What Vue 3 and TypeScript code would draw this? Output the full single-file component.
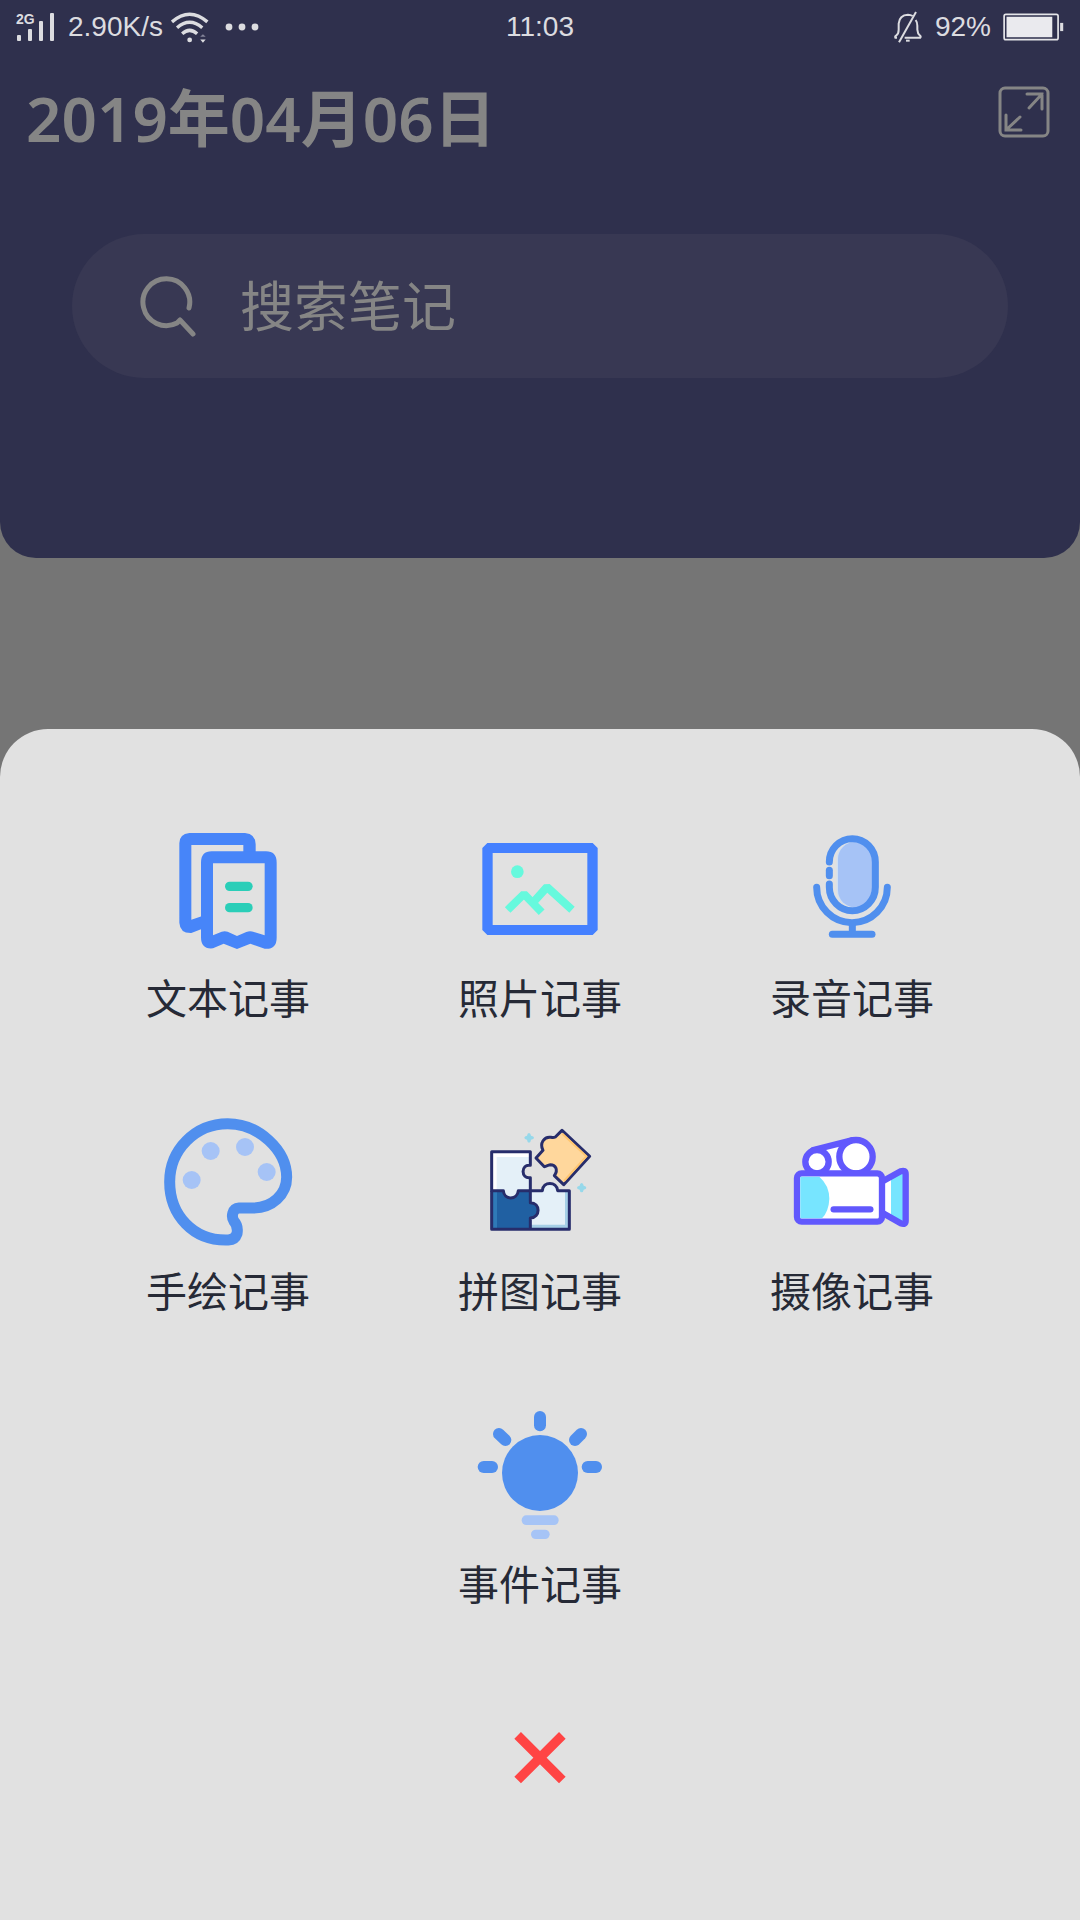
<script setup lang="ts">
import { ref } from 'vue'

type IconName = 'text' | 'photo' | 'audio' | 'draw' | 'puzzle' | 'video' | 'event'

interface NoteKind {
  icon: IconName
  label: string
  viewBox: string
}

const keyword = ref('')

const kinds: NoteKind[] = [
  { icon: 'text', label: '文本记事', viewBox: '78 21 432 432' },
  { icon: 'photo', label: '照片记事', viewBox: '84 21 432 432' },
  { icon: 'audio', label: '录音记事', viewBox: '90 21 432 432' },
  { icon: 'draw', label: '手绘记事', viewBox: '78 30 432 432' },
  { icon: 'puzzle', label: '拼图记事', viewBox: '84 30 432 432' },
  { icon: 'video', label: '摄像记事', viewBox: '90 30 432 432' },
  { icon: 'event', label: '事件记事', viewBox: '84 39 432 432' },
]
</script>

<template>
  <div class="page">
    <header class="header">
      <div class="status">
        <div class="status-left">
          <div class="signal">
            <span class="network">2G</span>
            <svg width="38" height="28" viewBox="0 0 38 28" fill="#dcdce0" aria-hidden="true">
              <rect x="1" y="22" width="4" height="6" rx="1" />
              <rect x="12" y="16" width="4" height="12" rx="1" />
              <rect x="23" y="8" width="4" height="20" rx="1" />
              <rect x="34" y="0" width="4" height="28" rx="1" />
            </svg>
          </div>
          <span class="speed">2.90K/s</span>
          <svg class="wifi" width="38" height="31" viewBox="499 34 110 91" fill="none" aria-hidden="true">
            <g stroke="#dcdce0" stroke-width="10">
              <path d="M501 63Q553 18 605 63" />
              <path d="M516 80Q553 48 590 80" />
              <path d="M531 98Q553 78 575 98" />
            </g>
            <circle cx="553" cy="116" r="7" fill="#dcdce0" />
            <path d="M584 107L592 99L600 107Z" fill="#85859a" />
            <path d="M584 115H600L592 124Z" fill="#dcdce0" />
          </svg>
          <svg class="dots" width="34" height="8" viewBox="0 0 34 8" fill="#dcdce0" aria-hidden="true">
            <circle cx="4" cy="4" r="3.4" />
            <circle cx="17" cy="4" r="3.4" />
            <circle cx="30" cy="4" r="3.4" />
          </svg>
        </div>
        <time class="clock">11:03</time>
        <div class="status-right">
          <svg width="30" height="32" viewBox="1023 34 86 96" fill="none" stroke="#dcdce0" stroke-width="6" aria-hidden="true">
            <path d="M1033 114H1028Q1026 110 1031 107Q1038 102 1038 90V72Q1040 46 1066 45Q1074 45 1080 49M1089 61Q1094 68 1094 78V90Q1095 102 1101 107Q1106 111 1103 114H1056" />
            <path d="M1090 37L1039 128" />
            <path d="M1060 123H1071" />
          </svg>
          <span class="percent">92%</span>
          <svg width="61" height="28" viewBox="1346 40 178 82" aria-hidden="true">
            <rect x="1349" y="44" width="158" height="74" rx="5" fill="none" stroke="#e4e4e8" stroke-width="5" />
            <rect x="1356" y="51" width="134" height="60" fill="#eaeaee" />
            <rect x="1513" y="69" width="9" height="24" fill="#dcdce0" />
          </svg>
        </div>
      </div>

      <div class="title-row">
        <h1 class="date">2019年04月06日</h1>
        <button class="expand" type="button" aria-label="展开">
          <svg width="52" height="52" viewBox="0 0 52 52" fill="none" stroke="#858585" stroke-width="3" stroke-linecap="round" aria-hidden="true">
            <rect x="2" y="2" width="48" height="48" rx="5" />
            <path d="M29 8H44V23M44 8L31 22" />
            <path d="M8 29V44H23M8 44L22 31" />
          </svg>
        </button>
      </div>

      <label class="search">
        <svg width="56" height="62" viewBox="0 0 56 62" fill="none" stroke="#858585" stroke-width="5" stroke-linecap="round" stroke-linejoin="round" aria-hidden="true">
          <path d="M49 33A23.4 23.4 0 1 0 37 48L40 45L53 59" />
        </svg>
        <input v-model="keyword" type="text" placeholder="搜索笔记" aria-label="搜索笔记" />
      </label>
    </header>

    <main class="sheet">
      <div class="grid">
        <button v-for="kind in kinds" :key="kind.icon" class="kind" type="button">
          <svg class="kind-icon" :viewBox="kind.viewBox" fill="none" aria-hidden="true">
            <g v-if="kind.icon === 'text'">
              <path fill="#4785f9" d="M178 69H345Q377 72 377 103V126H340V105H184V329L215 319V357L184 369Q150 370 148 338V100Q148 72 178 69Z" />
              <path fill="#4785f9" fill-rule="evenodd" d="M245 124H408Q440 124 440 158V383Q440 419 404 416L361 401L321 417L281 401L249 415Q213 419 213 382V158Q213 124 245 124ZM249 160V376L275 365Q284 362 293 365L321 378L349 366Q360 362 372 366L404 376V160Z" />
              <rect x="285" y="215" width="83" height="28" rx="14" fill="#2aceb8" />
              <rect x="285" y="279" width="83" height="28" rx="14" fill="#2aceb8" />
            </g>

            <g v-else-if="kind.icon === 'photo'">
              <path fill="#4480ff" fill-rule="evenodd" d="M142 99H458L473 114V360L458 375H142L127 360V114ZM158 129V345H442V129Z" />
              <circle cx="232" cy="185" r="19" fill="#66f9dd" />
              <g stroke="#66f9dd" stroke-width="24" stroke-linejoin="bevel">
                <path d="M203 300L252 252L305 307" />
                <path d="M279 278L321 231L396 299" />
              </g>
            </g>

            <g v-else-if="kind.icon === 'audio'">
              <rect x="260" y="96" width="106" height="196" rx="53" fill="#cfe0f4" />
              <rect x="264" y="96" width="102" height="196" rx="51" fill="#a6c3f6" />
              <g stroke="#508fee" stroke-width="21" stroke-linecap="round">
                <path d="M238 156A69 70 0 0 1 376 156V232A69 70 0 0 1 238 232V222" />
                <path d="M238 181V197" />
                <path d="M200 232A106 106 0 0 0 412 232" />
                <path d="M307 346V366" />
                <path d="M247 373H366" />
              </g>
            </g>

            <g v-else-if="kind.icon === 'draw'">
              <path stroke="#508fee" stroke-width="33" d="M295 420C190 424 119 345 119 245C119 150 195 71 293 71C385 71 470 150 470 232C470 285 425 323 372 324H327C307 325 303 350 312 364C323 376 323 390 321 401Q315 419 295 420Z" />
              <g fill="#a6c3f6">
                <circle cx="185" cy="240" r="27" />
                <circle cx="242" cy="153" r="27" />
                <circle cx="345" cy="141" r="27" />
                <circle cx="410" cy="216" r="27" />
              </g>
            </g>

            <g v-else-if="kind.icon === 'puzzle'">
              <path fill="#ffffff" d="M155 155H271V196C242 191 242 238 271 233V272H155Z" />
              <path fill="#e4f0f8" d="M170 171H271V196C242 191 242 238 271 233V272H235C232 301 192 301 190 272H170Z" />
              <path fill="#2060a2" d="M155 272H190C192 301 232 301 235 272H271V308C302 308 302 353 271 354V388H155Z" />
              <path fill="#2f7ab8" d="M157 274H171V386H157Z" />
              <path fill="#a5cfe6" d="M273 272H307C309 243 350 243 353 272H388V388H273V354C302 353 302 308 273 308Z" />
              <path fill="#e4f0f8" d="M273 272H307C309 243 350 243 353 272H375V374H273V354C302 353 302 308 273 308Z" />
              <g stroke="#272d6b" stroke-width="9" stroke-linejoin="round">
                <path d="M155 155H271V196C242 191 242 238 271 233V272H235C232 301 192 301 190 272H155Z" />
                <path d="M155 272V388H388V272H353C350 243 309 243 307 272H271V308C302 308 302 353 271 354V388" />
                <path fill="#ffd79c" d="M288 174L309 151C298 130 312 108 334 112Q340 114 346 111L366 91L449 169L371 254L343 227C356 208 346 194 331 194C322 195 320 200 313 200Z" />
              </g>
              <path stroke="#ffc670" stroke-width="6" d="M367 101L439 169L372 243" />
              <g fill="#96d8ea">
                <path d="M267 99Q272 99 273 107Q282 108 282 113Q282 118 273 119Q272 128 267 128Q262 128 261 119Q253 118 253 113Q253 108 261 107Q262 99 267 99Z" />
                <path d="M425 249Q430 249 431 257Q439 258 439 263Q439 268 431 269Q430 277 425 277Q420 277 419 269Q411 268 411 263Q411 258 419 257Q420 249 425 249Z" />
              </g>
            </g>

            <g v-else-if="kind.icon === 'video'">
              <path fill="#ffffff" d="M190 149L308 119L318 220H201Z" />
              <path fill="#ffffff" d="M398 244L424 229V353L398 338Z" />
              <path fill="#77e5ff" d="M423 230L466 212V372L423 353Z" />
              <g stroke="#6158fd" stroke-width="19" stroke-linejoin="round" stroke-linecap="round">
                <path d="M398 244L452 214Q467 209 467 222V362Q467 376 452 370L398 339" />
                <path d="M190 150L305 121" />
                <circle cx="201" cy="185" r="35" fill="#ffffff" />
                <circle cx="318" cy="170" r="50" fill="#ffffff" />
                <rect x="141" y="220" width="255" height="145" rx="14" fill="#ffffff" />
                <path d="M251 328H361" />
              </g>
              <path fill="#77e5ff" d="M151 230H208Q238 256 238 297Q236 335 216 355H151Z" />
            </g>

            <g v-else>
              <circle cx="300" cy="249" r="114" fill="#508fee" />
              <g stroke="#508fee" stroke-width="36" stroke-linecap="round">
                <path d="M300 81V106" />
                <path d="M131 231H156" />
                <path d="M443 231H468" />
                <path d="M177 132L196 150" />
                <path d="M423 132L405 150" />
              </g>
              <rect x="245" y="376" width="111" height="29" rx="14" fill="#a6c4f6" />
              <rect x="273" y="419" width="56" height="28" rx="14" fill="#a6c4f6" />
            </g>
          </svg>
          <span class="kind-label">{{ kind.label }}</span>
        </button>
      </div>

      <button class="close" type="button" aria-label="关闭">
        <svg width="96" height="96" viewBox="36 0 288 288" stroke="#ff4444" stroke-width="28" aria-hidden="true">
          <path d="M113 76L247 210M247 76L113 210" />
        </svg>
      </button>
    </main>
  </div>
</template>

<style>
body {
  margin: 0;
  background: #757575;
}
</style>

<style scoped>
.page {
  display: flex;
  flex-direction: column;
  min-height: 100vh;
  background: #757575;
  font-family: 'Noto Sans', 'Noto Sans CJK SC', sans-serif;
}

button {
  padding: 0;
  border: 0;
  background: none;
  font: inherit;
  cursor: pointer;
}

svg {
  display: block;
  flex: none;
}

.header {
  padding-bottom: 180px;
  border-radius: 0 0 36px 36px;
  background: #2f304d;
}

.status {
  display: grid;
  grid-template-columns: 1fr auto 1fr;
  align-items: center;
  height: 54px;
  padding: 0 16px;
  color: #dcdce0;
  font-family: 'Liberation Sans', sans-serif;
  font-size: 28px;
  line-height: 40px;
}

.status-left,
.status-right {
  display: flex;
  align-items: center;
}

.status-right {
  justify-content: flex-end;
  gap: 12px;
}

.signal {
  position: relative;
}

.network {
  position: absolute;
  top: -1px;
  left: 0;
  font-size: 14px;
  font-weight: 700;
  line-height: 14px;
}

.speed {
  margin-left: 14px;
}

.wifi {
  margin-left: 8px;
}

.dots {
  margin-left: 16px;
}

.title-row {
  display: flex;
  align-items: flex-start;
  justify-content: space-between;
  padding: 20px 30px 0 26px;
}

.date {
  margin: 0;
  color: #858585;
  font-size: 62px;
  font-weight: 600;
  line-height: 88px;
}

.expand {
  margin-top: 12px;
}

.search {
  display: flex;
  align-items: center;
  gap: 44px;
  height: 144px;
  margin: 72px 72px 0;
  padding: 0 68px;
  border-radius: 72px;
  background: #383853;
}

.search input {
  flex: 1;
  min-width: 0;
  padding: 0;
  border: 0;
  outline: 0;
  background: none;
  color: #858585;
  font: inherit;
  font-size: 54px;
  line-height: 72px;
}

.search input::placeholder {
  color: #858585;
  opacity: 1;
}

.sheet {
  display: flex;
  flex: 1;
  flex-direction: column;
  align-items: center;
  margin-top: 171px;
  padding: 88px 72px 96px;
  border-radius: 48px 48px 0 0;
  background: #e1e1e1;
}

.grid {
  display: flex;
  flex-wrap: wrap;
  justify-content: center;
  row-gap: 83px;
  width: 100%;
}

.kind {
  display: flex;
  flex: 0 0 calc(100% / 3);
  flex-direction: column;
  align-items: center;
  gap: 8px;
}

.kind-icon {
  width: 144px;
  height: 144px;
}

.kind-label {
  color: #262a36;
  font-size: 41px;
  line-height: 58px;
}

.close {
  margin-top: 97px;
}
</style>
